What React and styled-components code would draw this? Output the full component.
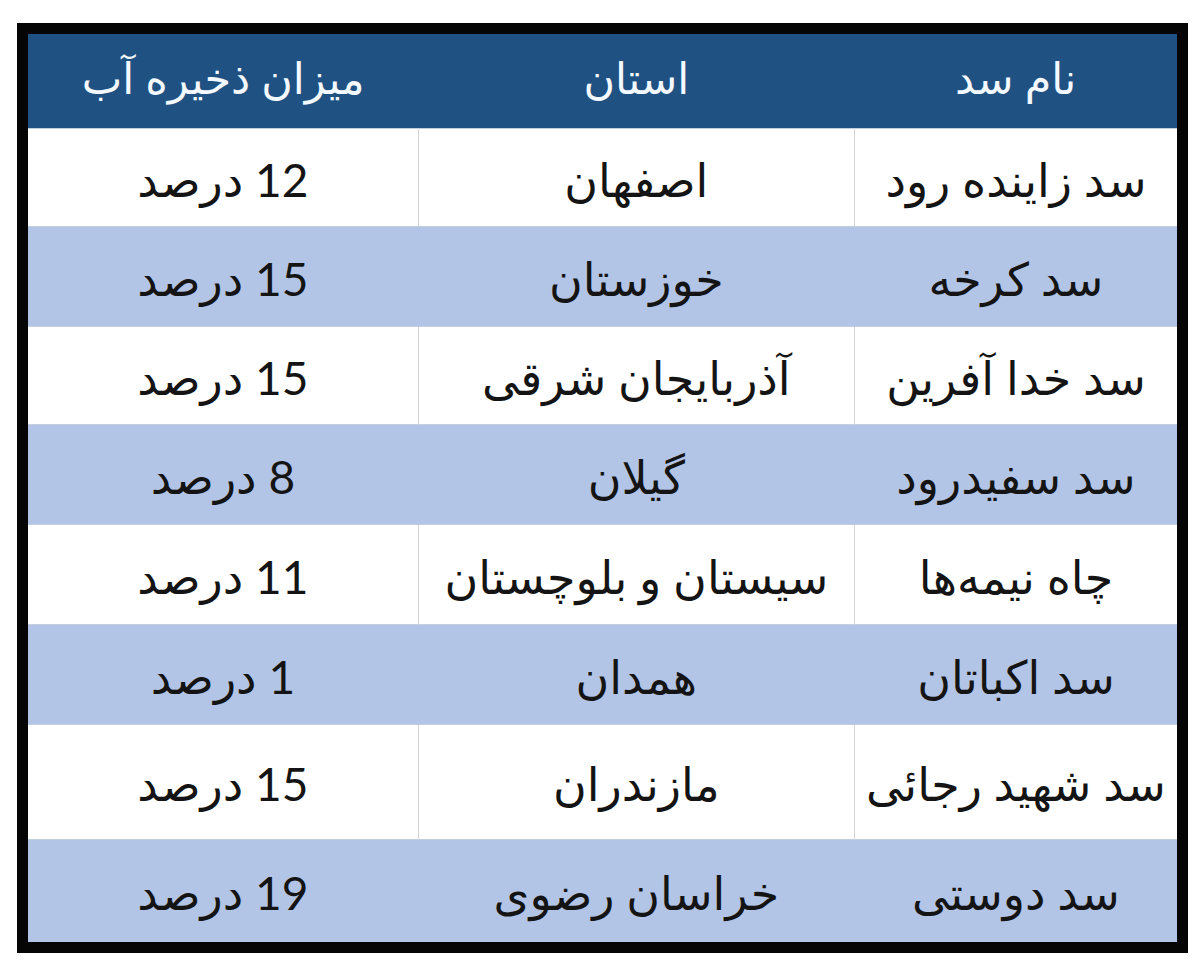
import React from "react";
import styled, { createGlobalStyle } from "styled-components";

const GlobalStyle = createGlobalStyle`
  html, body {
    margin: 0;
    padding: 0;
    background: #ffffff;
  }
  body {
    font-family: Lato, "DejaVu Sans", sans-serif;
  }
`;

const Page = styled.div`
  width: 1200px;
  height: 966px;
  padding: 23px 0 0 17px;
  box-sizing: border-box;
  background: #ffffff;
`;

const Table = styled.table`
  direction: rtl;
  border-collapse: collapse;
  border: 11px solid #050505;
  width: 1171px;
  table-layout: fixed;
  font-family: Lato, "DejaVu Sans", sans-serif;
`;

const HeadRow = styled.tr`
  height: 100px;
  background: #1f5283;
`;

const HeadCell = styled.th`
  padding: 0 0 6px;
  color: #f4f8ff;
  font-weight: 400;
  font-size: 43px;
  text-align: center;
  vertical-align: middle;
  white-space: nowrap;
`;

const Row = styled.tr`
  height: ${(p) => p.$h}px;
  background: ${(p) => (p.$shaded ? "#b3c5e6" : "#ffffff")};
  border-top: 1px solid #c3cee0;
`;

const Cell = styled.td`
  padding: 4px 0 0;
  color: #141414;
  font-size: 46px;
  text-align: center;
  vertical-align: middle;
  white-space: nowrap;
  border-left: 1px solid ${(p) => (p.$shaded ? "transparent" : "#d4d4d4")};
  &:last-child {
    border-left: none;
  }
`;

const rows = [
  { dam: "سد زاینده رود", province: "اصفهان", level: "12 درصد", h: 98 },
  { dam: "سد کرخه", province: "خوزستان", level: "15 درصد", h: 100 },
  { dam: "سد خدا آفرین", province: "آذربایجان شرقی", level: "15 درصد", h: 98 },
  { dam: "سد سفیدرود", province: "گیلان", level: "8 درصد", h: 100 },
  { dam: "چاه نیمه‌ها", province: "سیستان و بلوچستان", level: "11 درصد", h: 100 },
  { dam: "سد اکباتان", province: "همدان", level: "1 درصد", h: 100 },
  { dam: "سد شهید رجائی", province: "مازندران", level: "15 درصد", h: 115 },
  { dam: "سد دوستی", province: "خراسان رضوی", level: "19 درصد", h: 108 },
];

export default function App() {
  return (
    <Page>
      <GlobalStyle />
      <Table>
        <colgroup>
          <col style={{ width: 325 }} />
          <col style={{ width: 432 }} />
          <col style={{ width: 392 }} />
        </colgroup>
        <thead>
          <HeadRow>
            <HeadCell>نام سد</HeadCell>
            <HeadCell>استان</HeadCell>
            <HeadCell>میزان ذخیره آب</HeadCell>
          </HeadRow>
        </thead>
        <tbody>
          {rows.map((r, i) => {
            const shaded = i % 2 === 1;
            return (
              <Row key={r.dam} $h={r.h} $shaded={shaded}>
                <Cell $shaded={shaded}>{r.dam}</Cell>
                <Cell $shaded={shaded}>{r.province}</Cell>
                <Cell $shaded={shaded}>{r.level}</Cell>
              </Row>
            );
          })}
        </tbody>
      </Table>
    </Page>
  );
}
